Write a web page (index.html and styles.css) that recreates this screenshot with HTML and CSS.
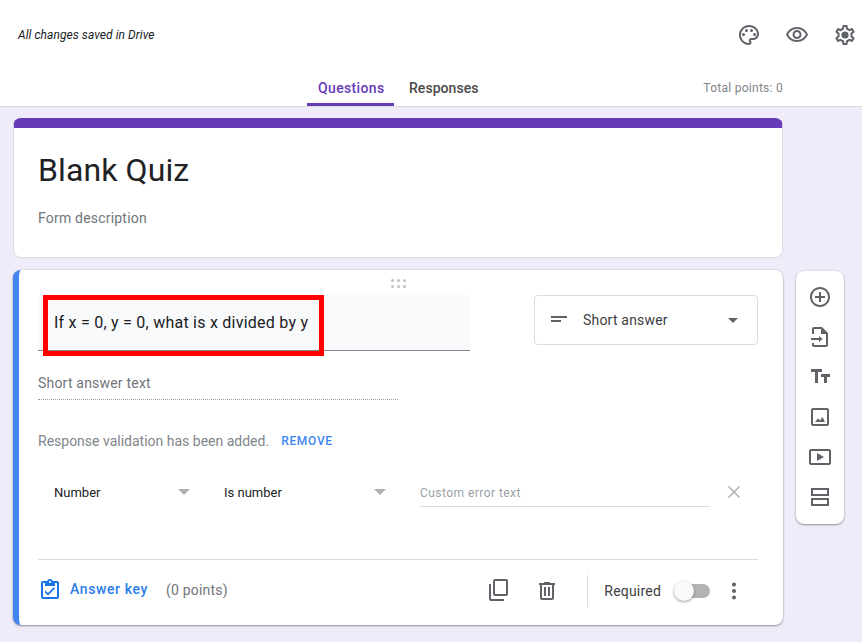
FILE: index.html
```html
<!DOCTYPE html>
<html lang="en">
<head>
<meta charset="utf-8">
<title>Blank Quiz</title>
<link rel="stylesheet" href="styles.css">
</head>
<body>
<header class="header">
  <div class="top-row">
    <span class="saved">All changes saved in Drive</span>
    <div class="top-icons">
      <svg class="icon" viewBox="0 0 24 24"><path d="M12 2C6.490 2 2 6.490 2 12s4.490 10 10 10c1.380 0 2.500-1.120 2.500-2.500 0-.61-.23-1.200-.64-1.670-.08-.1-.13-.21-.13-.33 0-.28.22-.5.5-.5H16c3.310 0 6-2.690 6-6 0-4.960-4.490-9-10-9zm4 13h-1.770c-1.380 0-2.500 1.120-2.500 2.500 0 .61.22 1.190.63 1.650.06.07.14.19.14.35 0 .28-.22.5-.5.5-4.410 0-8-3.590-8-8s3.590-8 8-8 8 3.140 8 7c0 2.210-1.790 4-4 4z"/><circle cx="6.500" cy="11.500" r="1.500"/><circle cx="9.500" cy="7.500" r="1.500"/><circle cx="14.500" cy="7.500" r="1.500"/><circle cx="17.500" cy="11.500" r="1.500"/></svg>
      <svg class="icon" viewBox="0 0 24 24"><path d="M12 6c3.790 0 7.170 2.130 8.820 5.500C19.170 14.870 15.790 17 12 17s-7.170-2.130-8.820-5.500C4.830 8.130 8.210 6 12 6m0-2C7 4 2.730 7.110 1 11.500 2.730 15.890 7 19 12 19s9.270-3.110 11-7.500C21.270 7.110 17 4 12 4zm0 5c1.380 0 2.500 1.120 2.500 2.500S13.380 14 12 14s-2.500-1.120-2.500-2.500S10.620 9 12 9m0-2c-2.480 0-4.500 2.020-4.500 4.500S9.520 16 12 16s4.500-2.020 4.500-4.500S14.480 7 12 7z"/></svg>
      <svg class="icon" viewBox="0 0 24 24"><path d="M19.430 12.980c.04-.32.070-.64.070-.98s-.03-.66-.07-.98l2.110-1.650c.19-.15.24-.42.120-.64l-2-3.460c-.12-.22-.39-.3-.61-.22l-2.490 1c-.52-.4-1.080-.73-1.690-.98l-.38-2.650C14.460 2.180 14.250 2 14 2h-4c-.25 0-.46.18-.49.42l-.38 2.650c-.61.25-1.170.59-1.690.98l-2.490-1c-.23-.09-.49 0-.61.22l-2 3.460c-.13.22-.07.49.12.64l2.110 1.650c-.04.32-.07.65-.07.98s.03.66.07.98l-2.110 1.650c-.19.15-.24.42-.12.64l2 3.460c.12.22.39.3.61.22l2.490-1c.52.4 1.080.73 1.690.98l.38 2.650c.03.24.24.42.49.42h4c.25 0 .46-.18.49-.42l.38-2.650c.61-.25 1.170-.59 1.690-.98l2.490 1c.23.09.49 0 .61-.22l2-3.460c.12-.22.07-.49-.12-.64l-2.110-1.650zM17.450 11.270c.04.31.05.52.05.73s-.02.43-.05.73l-.14 1.130.89.7 1.080.84-.7 1.210-1.270-.51-1.040-.42-.9.68c-.43.32-.84.56-1.250.73l-1.060.43-.16 1.130-.2 1.350h-1.400l-.19-1.350-.16-1.130-1.060-.43c-.43-.18-.83-.41-1.230-.71l-.91-.7-1.060.43-1.270.51-.7-1.210 1.080-.84.89-.7-.14-1.130c-.03-.31-.05-.54-.05-.74s.02-.43.05-.73l.14-1.130-.89-.7-1.080-.84.7-1.210 1.270.51 1.040.42.9-.68c.43-.32.84-.56 1.250-.73l1.060-.43.16-1.130.2-1.350h1.390l.19 1.350.16 1.130 1.060.43c.43.18.83.41 1.230.71l.91.7 1.060-.43 1.270-.51.7 1.210-1.070.85-.89.7.14 1.130z"/><circle cx="12" cy="12" r="3.600"/></svg>
    </div>
  </div>
  <div class="tab-row">
    <nav class="tabs">
      <span class="tab tab-active">Questions</span>
      <span class="tab">Responses</span>
    </nav>
    <span class="total">Total points: 0</span>
  </div>
</header>
<main class="main">
  <div class="column">
    <section class="card title-card">
      <h1 class="form-title">Blank Quiz</h1>
      <p class="form-desc">Form description</p>
    </section>
    <section class="card question-card">
      <div class="drag"><i></i><i></i><i></i><i></i><i></i><i></i></div>
      <div class="q-row">
        <div class="q-input">If x = 0, y = 0, what is x divided by y<span class="annotation"></span></div>
        <div class="type-select">
          <svg class="type-icon" viewBox="0 0 24 24"><path d="M4 8h16v2H4zM4 12h10v2H4z"/></svg>
          <span class="type-label">Short answer</span>
          <span class="caret caret-dark"></span>
        </div>
      </div>
      <div class="short-text">Short answer text</div>
      <div class="validation">
        <span>Response validation has been added.</span>
        <span class="remove">REMOVE</span>
      </div>
      <div class="rule-row">
        <div class="rule rule-a"><span>Number</span><span class="caret"></span></div>
        <div class="rule rule-b"><span>Is number</span><span class="caret"></span></div>
        <div class="error-input">Custom error text</div>
        <svg class="close" viewBox="0 0 14 14"><path d="M1.500 1.500l11 11M12.500 1.500l-11 11"/></svg>
      </div>
      <div class="footer">
        <svg class="key-icon" viewBox="0 0 24 24"><path d="M19 3h-4.180C14.400 1.840 13.300 1 12 1s-2.400.84-2.820 2H5c-1.100 0-2 .9-2 2v14c0 1.100.9 2 2 2h14c1.100 0 2-.9 2-2V5c0-1.100-.9-2-2-2zm-7 0c.55 0 1 .45 1 1s-.45 1-1 1-1-.45-1-1 .45-1 1-1zm7 16H5V5h2v3h10V5h2v14z"/><path d="M17 10.400 10 17.400l-3.500-3.500 1.200-1.200 2.300 2.300 5.800-5.800z"/></svg>
        <span class="key-label">Answer key</span>
        <span class="points">(0 points)</span>
        <div class="actions">
          <svg class="icon action-copy" viewBox="0 0 24 24"><path fill-rule="evenodd" d="M9 1h11a2 2 0 0 1 2 2v13a2 2 0 0 1-2 2H9a2 2 0 0 1-2-2V3a2 2 0 0 1 2-2zm0 2v13h11V3z"/><path d="M3 6h2v15h13v2H5a2 2 0 0 1-2-2z"/></svg>
          <svg class="icon action" viewBox="0 0 24 24"><path d="M15 4V3H9v1H4v2h1v13c0 1.100.9 2 2 2h10c1.100 0 2-.9 2-2V6h1V4h-5zm2 15H7V6h10v13z"/><path d="M9 8h2v9H9zM13 8h2v9h-2z"/></svg>
          <span class="divider"></span>
          <span class="required">Required</span>
          <span class="switch"><span class="knob"></span></span>
          <svg class="icon more" viewBox="0 0 24 24"><circle cx="12" cy="5.500" r="2"/><circle cx="12" cy="12" r="2"/><circle cx="12" cy="18.500" r="2"/></svg>
        </div>
      </div>
    </section>
  </div>
  <aside class="toolbar">
    <svg class="icon" viewBox="0 0 24 24"><path d="M13 7h-2v4H7v2h4v4h2v-4h4v-2h-4V7zm-1-5C6.490 2 2 6.490 2 12s4.490 10 10 10 10-4.490 10-10S17.510 2 12 2zm0 18c-4.410 0-8-3.590-8-8s3.590-8 8-8 8 3.590 8 8-3.590 8-8 8z"/></svg>
    <svg class="icon" viewBox="0 0 24 24"><path d="M14 2H6c-1.100 0-2 .9-2 2v5h2V4h7v5h5v11H6v-2H4v2c0 1.100.9 2 2 2h12c1.100 0 2-.9 2-2V8l-6-6z"/><path d="M11 11l3.500 3-3.500 3v-2H3v-2h8z"/></svg>
    <svg class="icon" viewBox="0 0 24 24"><path d="M3 4h11v3h-4v11H7V7H3zM13 9h9v3h-3v6h-3v-6h-3z"/></svg>
    <svg class="icon" viewBox="0 0 24 24"><path d="M19 3H5c-1.100 0-2 .9-2 2v14c0 1.100.9 2 2 2h14c1.100 0 2-.9 2-2V5c0-1.100-.9-2-2-2zm0 16H5V5h14v14z"/><path d="M7 17l3-3.500 2 2 2.500-3.500L17 17z"/></svg>
    <svg class="icon" viewBox="0 0 24 24"><path d="M21 4H3c-1.100 0-2 .9-2 2v12c0 1.100.9 2 2 2h18c1.100 0 2-.9 2-2V6c0-1.100-.9-2-2-2zm0 14H3V6h18v12zM9 8l7 4-7 4V8z"/></svg>
    <svg class="icon" viewBox="0 0 24 24"><path fill-rule="evenodd" d="M3 3h18v8H3zM5 5v4h14V5zM3 13h18v8H3zM5 15v4h14v-4z"/></svg>
  </aside>
</main>
</body>
</html>
```

FILE: styles.css
```css
* { box-sizing: border-box; }
html, body { margin: 0; height: 642px; overflow: hidden; }
body { background: #efebf8; font-family: Roboto, "Liberation Sans", sans-serif; color: #202124; }
.icon { width: 24px; height: 24px; fill: #5f6368; flex: none; display: block; }

.header { height: 107px; background: #fff; border-bottom: 1px solid #dadce0; display: flex; flex-direction: column; }
.top-row { height: 71px; display: flex; align-items: center; justify-content: space-between; padding: 0 5px 2px 18px; }
.saved { font-size: 12px; font-style: italic; color: #202124; letter-spacing: .06px; }
.top-icons { display: flex; gap: 24px; }
.tab-row { height: 35px; display: flex; align-items: flex-start; padding: 0 79px 0 307px; }
.tabs { display: flex; gap: 4.500px; height: 35px; }
.tab { padding: 9px 10.500px 0; font-size: 14px; font-weight: 500; letter-spacing: .05px; color: #4a4a4a; height: 35px; line-height: 16px; }
.tab-active { width: 87px; color: #673ab7; border-bottom: 3px solid #673ab7; padding-left: 11px; padding-right: 0; letter-spacing: .35px; }
.total { margin-left: auto; padding-top: 9px; font-size: 12px; line-height: 16px; color: #80868b; letter-spacing: .27px; }

.main { display: flex; align-items: flex-start; padding: 11px 0 0 13px; }
.column { width: 770px; display: flex; flex-direction: column; gap: 12px; }
.card { background: #fff; border-radius: 8px; }
.title-card { height: 140px; border: 1px solid #dadce0; border-top: 10px solid #673ab7; padding: 22px 24px 0; }
.form-title { margin: 0; font-size: 32px; font-weight: 400; line-height: 40px; color: #202124; letter-spacing: .1px; }
.form-desc { margin: 18px 0 0; font-size: 14px; line-height: 20px; color: #70757a; letter-spacing: .2px; }

.question-card { position: relative; height: 355px; border-left: 6px solid #4285f4; box-shadow: 0 1px 2px rgba(60,64,67,.5), 0 0 2px rgba(60,64,67,.15); padding: 0 25px 0 19px; }
.drag { height: 25px; padding-top: 9px; display: grid; grid-template-columns: repeat(3, 3px); gap: 3px 3px; justify-content: center; align-content: start; }
.drag i { width: 3px; height: 3px; border-radius: 50%; background: #bdc1c6; }
.q-row { display: flex; justify-content: space-between; align-items: flex-start; }
.q-input { position: relative; width: 432px; height: 56px; background: #f8f9fa; border-bottom: 1px solid #80868b; border-radius: 4px 4px 0 0; padding: 18px 0 0 16px; font-size: 16px; line-height: 20px; color: #202124; letter-spacing: .24px; }
.annotation { position: absolute; left: 5px; top: 0; width: 281px; height: 61px; border: 5px solid #f00; }
.type-select { width: 224px; height: 50px; border: 1px solid #dadce0; border-radius: 4px; display: flex; align-items: center; padding: 0 19px 0 12px; font-size: 14px; color: #3c4043; }
.type-icon { width: 24px; height: 24px; fill: #5f6368; margin-right: 12px; flex: none; }
.type-label { flex: 1; letter-spacing: .2px; }
.caret { width: 0; height: 0; border-left: 6px solid transparent; border-right: 6px solid transparent; border-top: 6px solid #b0b0b0; flex: none; }
.caret-dark { border-left-width: 5px; border-right-width: 5px; border-top: 5px solid #5f6368; }
.short-text { width: 360px; margin-top: 22px; height: 27px; border-bottom: 1px dotted #9aa0a6; font-size: 14px; line-height: 20px; color: #70757a; letter-spacing: .2px; }
.validation { margin-top: 31px; display: flex; gap: 12px; align-items: center; font-size: 14px; line-height: 20px; color: #80868b; }
.remove { color: #4285f4; font-size: 12px; font-weight: 500; letter-spacing: .7px; }
.rule-row { margin-top: 21px; height: 40px; display: flex; align-items: center; font-size: 13px; color: #202124; }
.rule { display: flex; align-items: center; justify-content: space-between; }
.rule-a { width: 152px; padding-left: 16px; }
.rule-b { width: 200px; padding: 0 4px 0 34px; margin-right: 30px; }
.error-input { width: 290px; height: 30px; padding-top: 6px; line-height: 20px; border-bottom: 1px solid #dadce0; color: #9aa0a6; font-size: 12px; letter-spacing: .45px; }
.close { width: 14px; height: 14px; margin-left: 17px; stroke: #b0b3b8; stroke-width: 1.600; fill: none; flex: none; }
.footer { margin-top: 47px; height: 66px; border-top: 1px solid #dadce0; display: flex; align-items: center; padding-bottom: 3px; }
.key-icon { width: 24px; height: 24px; fill: #1a73e8; flex: none; margin-bottom: 2px; }
.key-label { margin-left: 8px; margin-bottom: 4px; color: #2b7de9; font-size: 14px; font-weight: 500; letter-spacing: .6px; }
.points { margin-left: 18px; margin-bottom: 2px; color: #70757a; font-size: 14px; letter-spacing: .2px; }
.actions { margin-left: auto; display: flex; align-items: center; }
.action-copy { margin-right: 25px; margin-bottom: 2px; }
.action { margin-right: 25px; }
.divider { width: 1px; height: 32px; background: #dadce0; margin-right: 16px; margin-left: 3px; }
.required { font-size: 14px; color: #3c4043; letter-spacing: .2px; }
.switch { position: relative; width: 24px; height: 14px; margin-left: 25px; margin-right: 12px; background: #b4b4b4; border-radius: 7px; }
.knob { position: absolute; left: -12px; top: -3px; width: 20px; height: 20px; border-radius: 50%; background: #fafafa; box-shadow: 0 1px 3px rgba(0,0,0,.4); }
.more { margin-right: 12px; }

.toolbar { width: 48px; height: 253px; margin: 153px 0 0 13px; background: #fff; border-radius: 8px; box-shadow: 0 1px 2px rgba(60,64,67,.5), 0 0 2px rgba(60,64,67,.15); display: flex; flex-direction: column; align-items: center; padding-top: 14px; gap: 16px; }
```
